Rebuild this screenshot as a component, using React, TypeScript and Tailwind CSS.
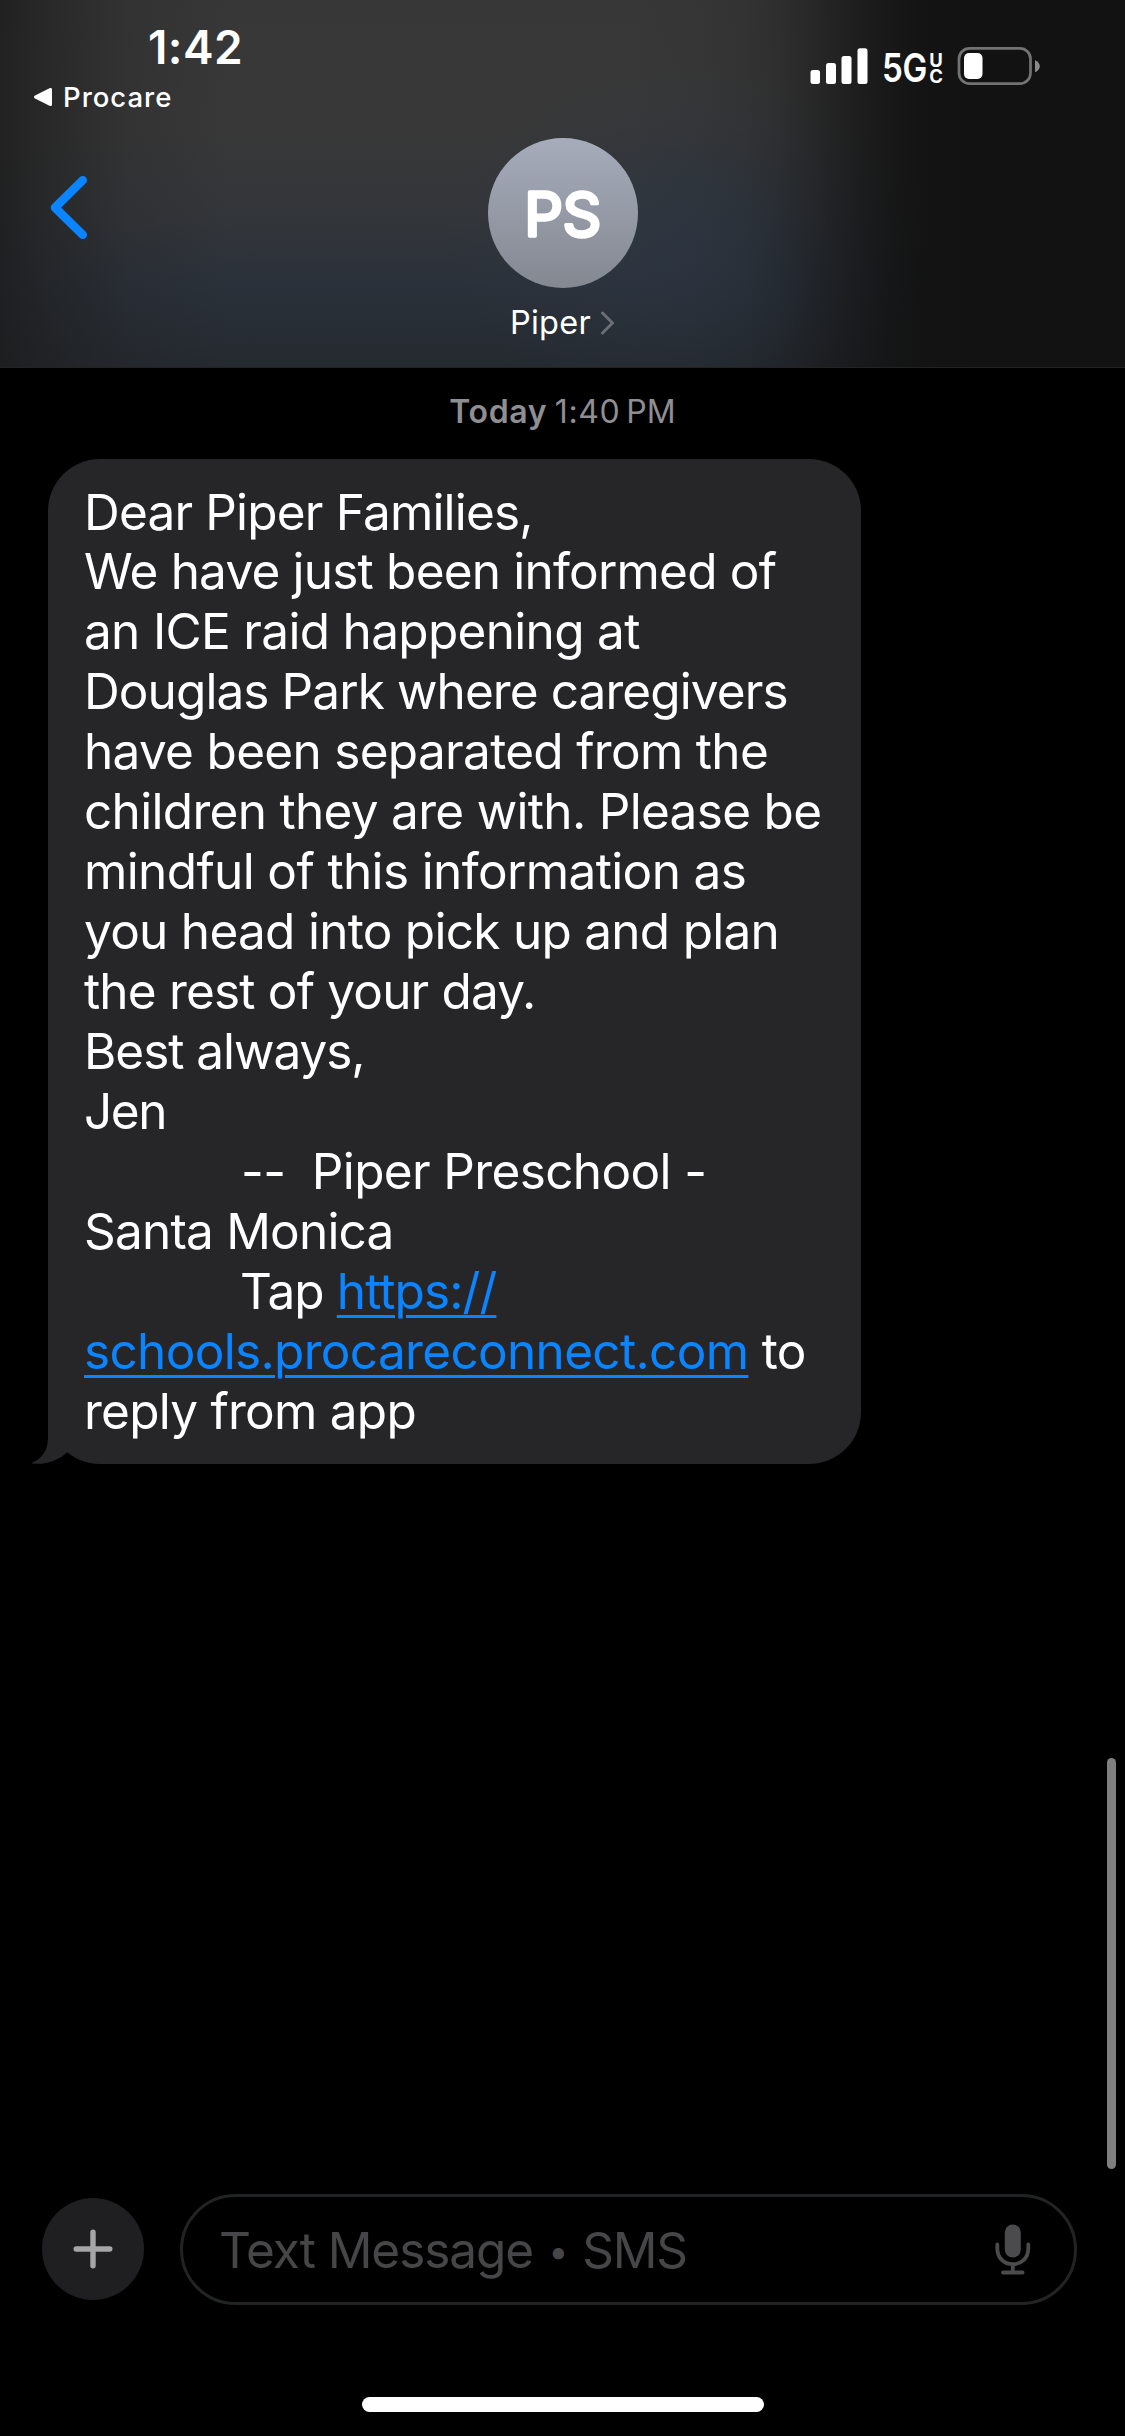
import { clsx } from "clsx";

interface MessageLine {
  text: string;
  className: string;
}

const LINES: MessageLine[] = [
  { text: "Dear Piper Families,", className: "pt-px tracking-[-0.82px]" },
  { text: "We have just been informed of", className: "tracking-[-0.8px]" },
  { text: "an ICE raid happening at", className: "tracking-[-0.68px]" },
  { text: "Douglas Park where caregivers", className: "tracking-[-0.91px]" },
  { text: "have been separated from the", className: "tracking-[-0.69px]" },
  { text: "children they are with. Please be", className: "tracking-[-0.69px]" },
  { text: "mindful of this information as", className: "tracking-[-0.63px]" },
  { text: "you head into pick up and plan", className: "tracking-[-0.72px]" },
  { text: "the rest of your day.", className: "tracking-[-0.82px]" },
  { text: "Best always,", className: "tracking-[-1.05px]" },
  { text: "Jen", className: "tracking-[-1.4px]" },
  { text: "--  Piper Preschool -", className: "pl-[157px] tracking-[-0.64px]" },
  { text: "Santa Monica", className: "tracking-[-0.8px]" },
];

function SignalIcon() {
  return (
    <svg width="58" height="37" viewBox="0 0 58 37" fill="white">
      <rect x="0.5" y="23" width="9.5" height="14" rx="2.5" />
      <rect x="16" y="16" width="10" height="21" rx="2.5" />
      <rect x="31.5" y="9" width="10" height="28" rx="2.5" />
      <rect x="47.5" y="1.2" width="10" height="35.8" rx="2.5" />
    </svg>
  );
}

function BatteryIcon() {
  return (
    <svg width="84" height="38" viewBox="0 0 84 38">
      <rect x="2" y="1.4" width="71.5" height="35.2" rx="10.5" fill="none" stroke="#737373" strokeWidth="2.7" />
      <rect x="7" y="6" width="18.5" height="26" rx="5" fill="white" />
      <path d="M78 13.2C81 14.4 82.8 16.6 82.8 19.2C82.8 21.8 81 24 78 25.2Z" fill="#8a8a8a" />
    </svg>
  );
}

function StatusBar() {
  return (
    <div className="flex h-[120px] justify-between">
      <div className="flex flex-col">
        <span className="mt-[18px] ml-[148px] text-[46px] leading-[58px] font-semibold tracking-[0.4px]">1:42</span>
        <div className="mt-[4px] ml-[33px] flex h-[34px] items-center gap-[10px]">
          <svg width="20" height="20" viewBox="0 0 20 20" fill="white">
            <path d="M2 8.6L16.5 1.3C18 0.6 19 1.2 19 2.8V17.2C19 18.8 18 19.4 16.5 18.7L2 11.4C0.6 10.7 0.6 9.3 2 8.6Z" />
          </svg>
          <span className="text-[27.5px] leading-[34px] font-medium tracking-[1px]">Procare</span>
        </div>
      </div>
      <div className="mt-[47px] mr-[84px] flex h-[38px] items-start">
        <SignalIcon />
        <span className="ml-[14px] mt-[-2px] block w-[46px] origin-left scale-x-[0.85] text-[39px] leading-[46px] font-semibold tracking-[-0.5px]">5G</span>
        <span className="mt-[5px] w-[16px] text-center text-[18.5px] leading-[16px] font-bold">
          U<br />C
        </span>
        <div className="ml-[13px]">
          <BatteryIcon />
        </div>
      </div>
    </div>
  );
}

function ContactHeader() {
  return (
    <header className="h-[368px] border-b border-[#232323] bg-[linear-gradient(90deg,rgba(26,26,26,0.75)_0px,rgba(27,27,27,0.5)_50px,rgba(29,29,29,0.18)_130px,transparent_230px,transparent_620px,rgba(18,18,18,0.03)_690px,rgba(18,18,18,0.12)_745px,rgba(18,18,18,0.25)_780px,rgba(18,18,18,0.44)_815px,rgba(18,18,18,0.65)_850px,rgba(18,18,18,0.83)_885px,rgba(18,18,18,0.95)_920px,#121212_970px),radial-gradient(ellipse_240px_170px_at_690px_235px,rgba(43,54,68,0.65),rgba(43,54,68,0.3)_50%,transparent),linear-gradient(180deg,#373737_0%,#383838_35%,#33363a_58%,#2b313a_78%,#252a30_100%)]">
      <StatusBar />
      <div className="grid grid-cols-3">
        <button className="ml-[46px] mt-[52px] h-[72px] w-[46px]">
          <svg width="46" height="72" viewBox="0 0 46 72" fill="none" stroke="#0a84ff" strokeWidth="8.6" strokeLinecap="round" strokeLinejoin="round">
            <path d="M36.7 8.3L9 35.6L36.7 62.8" />
          </svg>
        </button>
        <div className="mt-[18px] flex flex-col items-center">
          <div className="size-[150px] rounded-full bg-linear-to-b from-[#a6acbb] to-[#848891]">
            <svg width="150" height="150" viewBox="0 0 150 150">
              <text x="74.5" y="98" textAnchor="middle" fill="white" stroke="white" strokeWidth="3.4" strokeLinejoin="round" className="text-[60.500px] font-normal tracking-[-0.5px]">
                PS
              </text>
            </svg>
          </div>
          <div className="mt-[15px] flex h-[40px] items-center gap-[10px]">
            <span className="text-[32.5px] leading-[40px] tracking-[0.3px]">Piper</span>
            <svg className="-ml-px" width="15" height="24" viewBox="0 0 15 24" fill="none" stroke="#6b6e75" strokeWidth="3" strokeLinecap="round" strokeLinejoin="round">
              <path d="M2.5 2L12.5 12L2.5 22" />
            </svg>
          </div>
        </div>
      </div>
    </header>
  );
}

function MessageBubble() {
  return (
    <div className="relative ml-[48px] w-[813px] rounded-[52px] bg-[#262628] pt-[22px] pb-[23px] pl-[36px]">
      {LINES.map((line) => (
        <p key={line.text} className={clsx("h-[60px] whitespace-pre", line.className)}>
          {line.text}
        </p>
      ))}
      <p className="h-[60px] pl-[156px] tracking-[-0.9px] whitespace-pre">
        Tap <a className="text-[#0a84ff] underline decoration-[3px] underline-offset-[6px]">https://</a>
      </p>
      <p className="h-[60px] tracking-[-0.67px] whitespace-pre">
        <a className="text-[#0a84ff] underline decoration-[3px] underline-offset-[6px]">schools.procareconnect.com</a> to
      </p>
      <p className="h-[60px] tracking-[-0.75px] whitespace-pre">reply from app</p>
      {/* Bubble tail */}
      <svg className="absolute bottom-0 -left-[18px]" width="60" height="70" viewBox="0 0 60 70" fill="#262628">
        <path d="M18 10V44C18 56 12 65 1 69.2C14 71.5 28 67 37.2 58.2L50 40Z" />
      </svg>
    </div>
  );
}

function Composer() {
  return (
    <div className="flex h-[111px] items-center pl-[42px] pr-[48px]">
      <button className="-mt-px flex size-[102px] items-center justify-center rounded-full bg-[#1f1f21]">
        <svg width="40" height="40" viewBox="0 0 40 40" stroke="#a5a5a7" strokeWidth="5.4" strokeLinecap="round">
          <path d="M20 3.2V36.8M3.2 20H36.8" />
        </svg>
      </button>
      <div className="ml-[36px] flex h-[111px] flex-1 items-center justify-between rounded-full border-[3px] border-[#222324] pl-[36px] pr-[43px]">
        <div className="flex items-center text-[49.5px] leading-[60px] text-[#464648]">
          <span className="tracking-[-1.05px]">Text Message</span>
          <span className="mt-[2px] ml-[15px] w-[20px] text-[36px] leading-[60px]">•</span>
          <span className="ml-[14px] tracking-[-1.2px]">SMS</span>
        </div>
        <svg width="36" height="52" viewBox="0 0 36 52" fill="none" stroke="#4b4b4d" strokeWidth="3.8" strokeLinecap="round">
          <rect x="9.8" y="0.5" width="16" height="33" rx="8" fill="#4b4b4d" stroke="none" />
          <path d="M2.3 20.5V24.5C2.3 34 9 40.2 17.8 40.2C26.6 40.2 33.3 34 33.3 24.5V20.5M17.8 40.2V48.5M8 48.5H27.6" />
        </svg>
      </div>
    </div>
  );
}

export default function App() {
  return (
    <div className="relative flex h-[2436px] w-[1125px] flex-col overflow-hidden bg-black font-[Inter,'Liberation_Sans',sans-serif] text-white">
      <ContactHeader />
      <div className="mt-[24px] flex h-[40px] items-center justify-center text-[32px] leading-[40px] whitespace-pre text-[#8e8e93]">
        <span className="font-semibold tracking-[0.6px]">Today </span>
        <span className="-ml-px tracking-[0.6px]">1:40</span>
        <span className="ml-[6px]">PM</span>
      </div>
      <main className="mt-[27px] flex-1 text-[49.5px] leading-[60px]">
        <MessageBubble />
      </main>
      <Composer />
      <div className="mx-auto mt-[92px] mb-[24px] h-[15px] w-[402px] rounded-full bg-white" />
      {/* Scroll indicator */}
      <div className="absolute top-[1758px] right-[9px] h-[411px] w-[9px] rounded-full bg-[#7f7f7f]" />
    </div>
  );
}
